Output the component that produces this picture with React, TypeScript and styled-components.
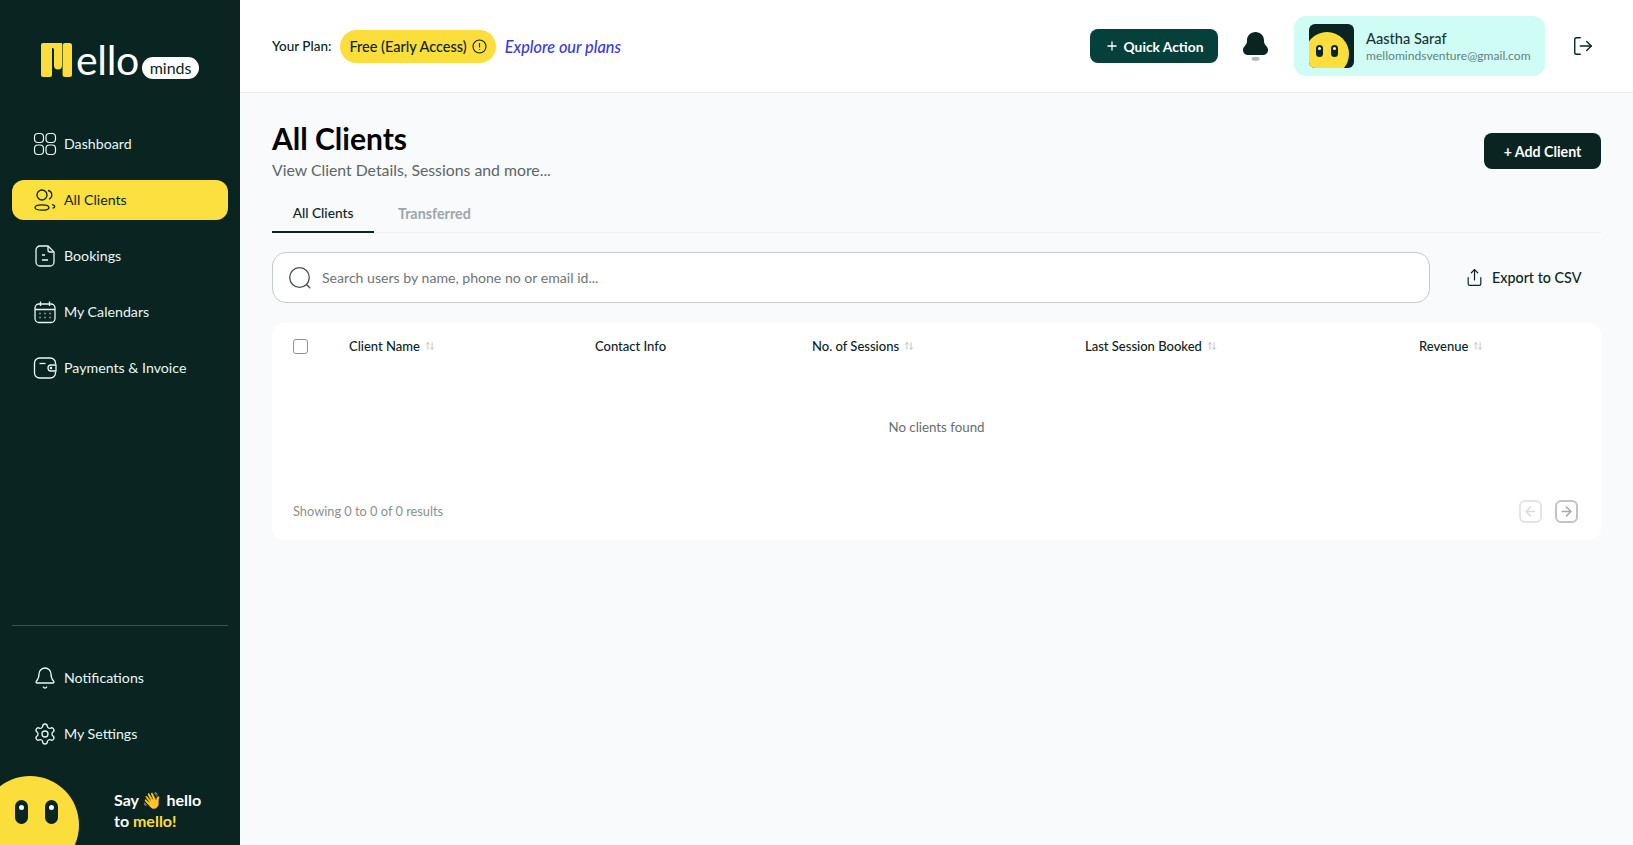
import styled, { createGlobalStyle } from 'styled-components';
import {
  ArrowLeft,
  ArrowRight,
  ArrowUpDown,
  Bell,
  LogOut,
  Plus,
  Settings,
  Share,
} from 'lucide-react';

const GlobalStyle = createGlobalStyle`
  html, body {
    margin: 0;
    height: 100%;
    overflow: hidden;
    background: #f8fafc;
  }
  * {
    box-sizing: border-box;
  }
  body {
    font-family: 'Lato', 'Noto Sans', sans-serif;
    color: #0a2422;
  }
`;

//#region layout
const Shell = styled.div`
  display: flex;
  height: 100vh;
`;
const Sidebar = styled.aside`
  width: 240px;
  flex-shrink: 0;
  background: #0a2422;
  display: flex;
  flex-direction: column;
  padding: 0 12px;
  overflow: hidden;
`;
const LogoRow = styled.div`
  height: 120px;
  padding: 43px 0 0 29px;
  display: flex;
  align-items: flex-start;
`;
const LogoWord = styled.span`
  font-size: 41px;
  line-height: 33px;
  font-weight: 400;
  color: #fff;
  margin-left: 4px;
  letter-spacing: -0.3px;
`;
const LogoPill = styled.span`
  width: 57px;
  height: 22px;
  background: #fff;
  color: #0a2422;
  font-size: 16px;
  line-height: 22px;
  text-align: center;
  border-radius: 11px;
  margin: 14px 0 0 3px;
`;
const Nav = styled.nav`
  display: flex;
  flex-direction: column;
  gap: 16px;
  padding-top: 4px;
`;
const NavItem = styled.a<{ $active?: boolean }>`
  height: 40px;
  display: flex;
  align-items: center;
  gap: 7px;
  padding-left: 21px;
  border-radius: 12px;
  font-size: 14.2px;
  color: ${({ $active }) => ($active ? '#0a2422' : '#e8f8f4')};
  background: ${({ $active }) => ($active ? '#fbe03f' : 'transparent')};
  svg {
    flex-shrink: 0;
  }
`;
const NavLabel = styled.span`
  margin-bottom: 2px;
`;
const Spacer = styled.div`
  flex: 1;
`;
const Divider = styled.div`
  height: 1px;
  background: #3d5452;
  margin-bottom: 32px;
`;
const BottomNav = styled(Nav)`
  padding-top: 0;
`;
const Hello = styled.div`
  height: 69px;
  margin: 22px 0 0 -12px;
  display: flex;
  align-items: flex-start;
`;
const HelloFace = styled.div`
  width: 98px;
  height: 98px;
  margin-left: -19px;
  border-radius: 50%;
  background: #fbdd3c;
  flex-shrink: 0;
  display: flex;
  justify-content: center;
  gap: 17px;
  padding-top: 24px;
  padding-left: 12px;
`;
const Eye = styled.span<{ $small?: boolean }>`
  position: relative;
  width: ${({ $small }) => ($small ? '7px' : '13px')};
  height: ${({ $small }) => ($small ? '12px' : '24px')};
  border-radius: 7px;
  background: #0a2422;
  &::after {
    content: '';
    position: absolute;
    top: ${({ $small }) => ($small ? '2px' : '5px')};
    left: 50%;
    width: ${({ $small }) => ($small ? '3px' : '5px')};
    height: ${({ $small }) => ($small ? '3px' : '5px')};
    margin-left: ${({ $small }) => ($small ? '-1.5px' : '-2.5px')};
    border-radius: 50%;
    background: #fff;
  }
`;
const HelloText = styled.div`
  margin: 13px 0 0 35px;
  font-size: 16px;
  line-height: 21px;
  font-weight: 700;
  color: #fff;
  white-space: nowrap;
  em {
    font-style: normal;
    color: #fbdd3c;
  }
`;
const Main = styled.div`
  flex: 1;
  min-width: 0;
  display: flex;
  flex-direction: column;
`;
//#endregion

//#region header
const Header = styled.header`
  height: 93px;
  flex-shrink: 0;
  background: #fff;
  border-bottom: 1px solid #e7e9ec;
  display: flex;
  align-items: center;
  padding: 0 32px;
`;
const PlanLabel = styled.span`
  font-size: 13.5px;
  font-weight: 500;
  margin-right: 9px;
`;
const PlanPill = styled.span`
  height: 33px;
  display: flex;
  align-items: center;
  gap: 5px;
  padding: 0 9px;
  border-radius: 17px;
  background: #fbdd3c;
  font-size: 14.5px;
  font-weight: 500;
`;
const PlanLink = styled.a`
  margin-left: 9px;
  font-size: 16.3px;
  font-style: italic;
  font-weight: 500;
  color: #3b3bd6;
`;
const HeaderRight = styled.div`
  margin-left: auto;
  display: flex;
  align-items: center;
`;
const QuickButton = styled.button`
  height: 34px;
  width: 128px;
  border: 0;
  border-radius: 8px;
  background: #06403a;
  color: #fff;
  display: flex;
  align-items: center;
  justify-content: center;
  gap: 5px;
  font: 700 13.8px 'Lato', sans-serif;
`;
const BellMark = styled.svg`
  margin: 0 26px 0 25px;
`;
const UserCard = styled.div`
  width: 251px;
  height: 60px;
  border-radius: 12px;
  background: #cffdf6;
  display: flex;
  align-items: center;
  padding-left: 15px;
  gap: 12px;
`;
const Avatar = styled.div`
  width: 45px;
  height: 44px;
  border-radius: 6px;
  background: #0a2422;
  overflow: hidden;
`;
const AvatarFace = styled.div`
  width: 44px;
  height: 44px;
  margin: 8px 0 0 -4px;
  border-radius: 50%;
  background: #fbdd3c;
  display: flex;
  justify-content: center;
  gap: 8px;
  padding-top: 13px;
`;
const UserName = styled.div`
  font-size: 14.6px;
  font-weight: 500;
  line-height: 18px;
  color: #173433;
`;
const UserMail = styled.div`
  font-size: 12.1px;
  line-height: 15px;
  color: #66807d;
`;
const LogoutIcon = styled(LogOut)`
  margin-left: 27px;
  margin-right: 7px;
`;
//#endregion

//#region content
const Content = styled.main`
  flex: 1;
  padding: 30px 32px 0;
  background: #f8fafc;
`;
const TitleRow = styled.div`
  display: flex;
  justify-content: space-between;
`;
const PageTitle = styled.h1`
  margin: 0;
  font-size: 30px;
  line-height: 30px;
  font-weight: 700;
  color: #000;
`;
const PageSub = styled.p`
  margin: 7px 0 1px;
  font-size: 15.8px;
  line-height: 20px;
  color: #5d6665;
`;
const AddButton = styled.button`
  height: 36px;
  width: 117px;
  margin-top: 10px;
  border: 0;
  border-radius: 8px;
  background: #0a2422;
  color: #fff;
  font: 700 14.2px 'Lato', sans-serif;
`;
const Tabs = styled.div`
  display: flex;
  margin-top: 12px;
  height: 40px;
  border-bottom: 1px solid #f0f2f4;
`;
const Tab = styled.div<{ $active?: boolean }>`
  height: 40px;
  width: ${({ $active }) => ($active ? '102px' : 'auto')};
  margin-left: ${({ $active }) => ($active ? '0' : '24px')};
  display: flex;
  align-items: center;
  justify-content: center;
  font-size: ${({ $active }) => ($active ? '13.7px' : '14.3px')};
  font-weight: ${({ $active }) => ($active ? 500 : 700)};
  color: ${({ $active }) => ($active ? '#0a2422' : '#a0a5ab')};
  border-bottom: ${({ $active }) => ($active ? '2px solid #0a2422' : 'none')};
`;
const SearchRow = styled.div`
  display: flex;
  align-items: center;
  margin-top: 19px;
`;
const SearchBox = styled.div`
  width: 1158px;
  height: 51px;
  display: flex;
  align-items: center;
  gap: 11px;
  padding-left: 16px;
  background: #fff;
  border: 1px solid #c5c9cd;
  border-radius: 14px;
  font-size: 14.1px;
  color: #6e7573;
`;
const ExportLink = styled.div`
  margin-left: 35px;
  display: flex;
  align-items: center;
  gap: 8px;
  font-size: 14.3px;
  font-weight: 500;
`;
const TableCard = styled.section`
  margin-top: 20px;
  height: 217px;
  background: #fff;
  border-radius: 12px;
  padding: 0 21px;
  display: flex;
  flex-direction: column;
`;
const HeadRow = styled.div`
  display: grid;
  grid-template-columns: 56px 246px 217px 273px 334px 1fr;
  align-items: center;
  height: 46px;
`;
const Checkbox = styled.span`
  width: 15px;
  height: 15px;
  border: 1.5px solid #8f9396;
  border-radius: 3px;
`;
const HeadCell = styled.div`
  display: flex;
  align-items: center;
  gap: 5px;
  font-size: 13px;
  font-weight: 500;
  color: #0a2422;
  svg {
    color: #b5b9bc;
  }
`;
const EmptyText = styled.div`
  margin-top: 48px;
  height: 20px;
  text-align: center;
  font-size: 13.3px;
  line-height: 20px;
  color: #666d6b;
`;
const TableFoot = styled.div`
  margin-top: auto;
  margin-bottom: 15px;
  height: 28px;
  display: flex;
  align-items: center;
  justify-content: space-between;
  font-size: 12.8px;
  color: #8a8f8e;
`;
const Pager = styled.div`
  display: flex;
  gap: 13px;
  margin-right: 2px;
`;
const PageButton = styled.button<{ $disabled?: boolean }>`
  width: 23px;
  height: 23px;
  padding: 0;
  display: flex;
  align-items: center;
  justify-content: center;
  background: #fff;
  border-radius: 6px;
  border: 2px solid ${({ $disabled }) => ($disabled ? '#e3e4e5' : '#c2c3c4')};
  color: ${({ $disabled }) => ($disabled ? '#dcdddd' : '#a8a9aa')};
`;
//#endregion

const iconProps = { size: 24, strokeWidth: 1.3 };

function DashboardIcon() {
  return (
    <svg width="24" height="24" viewBox="0 0 24 24" fill="none" stroke="currentColor" strokeWidth="1.2">
      <rect x="1.5" y="1.5" width="9" height="9" rx="3.5" />
      <rect x="13" y="1.5" width="9.5" height="9" rx="3.5" />
      <rect x="1.5" y="13" width="9" height="9.5" rx="3.5" />
      <rect x="13" y="13" width="9.5" height="9.5" rx="3.5" />
    </svg>
  );
}

function ClientsIcon() {
  return (
    <svg width="24" height="24" viewBox="0 0 24 24" fill="none" stroke="currentColor" strokeWidth="1.3">
      <circle cx="9" cy="7" r="5" />
      <ellipse cx="9" cy="19.500" rx="7" ry="2.700" />
      <path d="M15 2.500a4.500 4.500 0 0 1 1 8.600M19 16.500c2 .6 3 1.500 2.600 2.400-.2.500-1 .9-2 1.200" />
    </svg>
  );
}

function BookingIcon() {
  return (
    <svg width="24" height="24" viewBox="0 0 24 24" fill="none" stroke="currentColor" strokeWidth="1.3">
      <path d="M7 2h8l6 6v10a4 4 0 0 1-4 4H7a4 4 0 0 1-4-4V6a4 4 0 0 1 4-4z" />
      <path d="M15 2.500V6a2 2 0 0 0 2 2h3.500M9 11h3M9 16h6" />
    </svg>
  );
}

function CalendarIcon() {
  return (
    <svg width="24" height="24" viewBox="0 0 24 24" fill="none" stroke="currentColor" strokeWidth="1.3">
      <rect x="2" y="4" width="20" height="18.500" rx="4" />
      <path d="M2 9.500h20M7.500 1.500v4.500M16.500 1.500v4.500" />
      <path d="M6.500 13.500h1M11.500 13.500h1M16.500 13.500h1M6.500 17.500h1M11.500 17.500h1M16.500 17.500h1" strokeWidth="1.500" />
    </svg>
  );
}

function WalletIcon() {
  return (
    <svg width="24" height="24" viewBox="0 0 24 24" fill="none" stroke="currentColor" strokeWidth="1.3">
      <path d="M22.500 8V7a5 5 0 0 0-5-5h-11a5 5 0 0 0-5 5v10a5 5 0 0 0 5 5h11a5 5 0 0 0 5-5v-1" />
      <path d="M6.500 7.500h6" />
      <path d="M23 9h-5a3 3 0 0 0 0 6h5z" />
      <circle cx="18" cy="12" r=".6" />
    </svg>
  );
}

function SearchIcon() {
  return (
    <svg width="22" height="22" viewBox="0 0 22 22" fill="none" stroke="#4a5150" strokeWidth="1.300">
      <circle cx="10.500" cy="10.500" r="9.800" />
      <path d="M17.800 17.800l3 3" strokeLinecap="round" />
    </svg>
  );
}

function LogoMark() {
  return (
    <svg width="31" height="34" viewBox="0 0 31 34">
      <path
        fill="#fbdd3c"
        d="M2 0h19v22.500a4 4 0 0 1-8 0V6.500a1.500 1.500 0 0 0-1.500-1.500H11v27a2 2 0 0 1-2 2H2a2 2 0 0 1-2-2V2a2 2 0 0 1 2-2z"
      />
      <rect x="21.600" y="0" width="9.400" height="34" rx="2.500" fill="#fbdd3c" />
    </svg>
  );
}

function App() {
  return (
    <>
      <GlobalStyle />
      <Shell>
        <Sidebar>
          <LogoRow>
            <LogoMark />
            <LogoWord>ello</LogoWord>
            <LogoPill>minds</LogoPill>
          </LogoRow>
          <Nav>
            <NavItem><DashboardIcon /><NavLabel>Dashboard</NavLabel></NavItem>
            <NavItem $active><ClientsIcon /><NavLabel>All Clients</NavLabel></NavItem>
            <NavItem><BookingIcon /><NavLabel>Bookings</NavLabel></NavItem>
            <NavItem><CalendarIcon /><NavLabel>My Calendars</NavLabel></NavItem>
            <NavItem><WalletIcon /><NavLabel>Payments &amp; Invoice</NavLabel></NavItem>
          </Nav>
          <Spacer />
          <Divider />
          <BottomNav>
            <NavItem><Bell {...iconProps} /><NavLabel>Notifications</NavLabel></NavItem>
            <NavItem><Settings {...iconProps} /><NavLabel>My Settings</NavLabel></NavItem>
          </BottomNav>
          <Hello>
            <HelloFace>
              <Eye />
              <Eye />
            </HelloFace>
            <HelloText>
              Say 👋 hello
              <br />
              to <em>mello!</em>
            </HelloText>
          </Hello>
        </Sidebar>
        <Main>
          <Header>
            <PlanLabel>Your Plan:</PlanLabel>
            <PlanPill>
              Free (Early Access)
              <svg width="15" height="15" viewBox="0 0 15 15" fill="none" stroke="#0a2422" strokeWidth="1.1">
                <circle cx="7.500" cy="7.500" r="6.500" />
                <path d="M7.500 4v4.500M7.500 10.300v.7" />
              </svg>
            </PlanPill>
            <PlanLink>Explore our plans</PlanLink>
            <HeaderRight>
              <QuickButton><Plus size={14} strokeWidth={2.2} />Quick Action</QuickButton>
              <BellMark width="25" height="29" viewBox="0 0 25 29">
                <path
                  fill="#0a2422"
                  d="M12.500 0c5 0 8.500 3.600 8.500 8.500 0 2.300.4 3.600 2 5.200 1.300 1.300 2 2.600 2 4.300 0 3-2.400 5-5.500 5h-14C2.400 23 0 21 0 18c0-1.700.7-3 2-4.300 1.600-1.600 2-2.900 2-5.200C4 3.600 7.500 0 12.500 0z"
                />
                <ellipse cx="12.500" cy="26.800" rx="4" ry="2" fill="#b5b9b9" />
              </BellMark>
              <UserCard>
                <Avatar>
                  <AvatarFace>
                    <Eye $small />
                    <Eye $small />
                  </AvatarFace>
                </Avatar>
                <div>
                  <UserName>Aastha Saraf</UserName>
                  <UserMail>mellomindsventure@gmail.com</UserMail>
                </div>
              </UserCard>
              <LogoutIcon size={22} strokeWidth={1.5} />
            </HeaderRight>
          </Header>
          <Content>
            <TitleRow>
              <div>
                <PageTitle>All Clients</PageTitle>
                <PageSub>View Client Details, Sessions and more...</PageSub>
              </div>
              <AddButton>+ Add Client</AddButton>
            </TitleRow>
            <Tabs>
              <Tab $active>All Clients</Tab>
              <Tab>Transferred</Tab>
            </Tabs>
            <SearchRow>
              <SearchBox>
                <SearchIcon />
                Search users by name, phone no or email id...
              </SearchBox>
              <ExportLink>
                <Share size={19} strokeWidth={1.5} />
                Export to CSV
              </ExportLink>
            </SearchRow>
            <TableCard>
              <HeadRow>
                <Checkbox />
                <HeadCell>Client Name <ArrowUpDown size={10} /></HeadCell>
                <HeadCell>Contact Info</HeadCell>
                <HeadCell>No. of Sessions <ArrowUpDown size={10} /></HeadCell>
                <HeadCell>Last Session Booked <ArrowUpDown size={10} /></HeadCell>
                <HeadCell>Revenue <ArrowUpDown size={10} /></HeadCell>
              </HeadRow>
              <EmptyText>No clients found</EmptyText>
              <TableFoot>
                Showing 0 to 0 of 0 results
                <Pager>
                  <PageButton $disabled><ArrowLeft size={15} strokeWidth={2.4} /></PageButton>
                  <PageButton><ArrowRight size={15} strokeWidth={2.4} /></PageButton>
                </Pager>
              </TableFoot>
            </TableCard>
          </Content>
        </Main>
      </Shell>
    </>
  );
}

export default App;
